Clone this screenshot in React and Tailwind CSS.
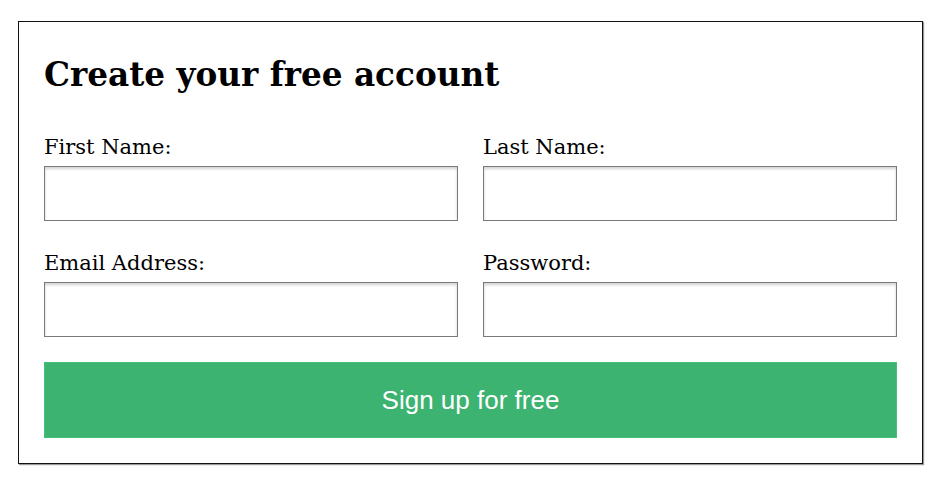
const fields = [
  { label: "First Name:", type: "text" },
  { label: "Last Name:", type: "text" },
  { label: "Email Address:", type: "email" },
  { label: "Password:", type: "password" },
];

export default function App() {
  return (
    <div className="min-h-screen bg-white pt-[21px] pl-[18px]">
      <form className="w-[905px] border border-[#111] bg-white px-[25px] pt-[25px] pb-[25px] shadow-[1px_1px_1px_rgba(0,0,0,0.4)]">
        <h1 className="mt-[6px] font-['DejaVu_Serif',serif] text-[32.7px] font-bold leading-[44px] text-black">
          Create your free account
        </h1>

        <div className="mt-[36px] grid grid-cols-2 gap-x-[25px] gap-y-[28px]">
          {fields.map(({ label, type }) => (
            <label key={label} className="flex flex-col">
              <span className="font-['DejaVu_Serif',serif] text-[21px] leading-[28px] text-black">
                {label}
              </span>
              <input
                type={type}
                className="mt-[5px] h-[55px] border border-[#7a7a7a] bg-white shadow-[inset_0_2px_3px_rgba(0,0,0,0.18)] outline-none"
              />
            </label>
          ))}
        </div>

        <button
          type="button"
          className="mt-[25px] h-[76px] w-full border border-[#45c07c] bg-[#3cb371] font-['Liberation_Sans',sans-serif] text-[26px] text-white"
        >
          Sign up for free
        </button>
      </form>
    </div>
  );
}
